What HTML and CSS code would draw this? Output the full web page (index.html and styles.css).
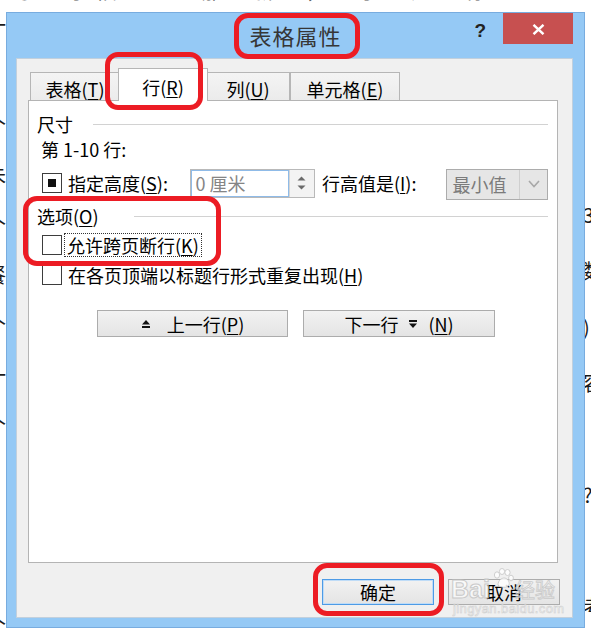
FILE: index.html
```html
<!DOCTYPE html>
<html lang="zh-CN">
<head>
<meta charset="utf-8">
<title>表格属性</title>
<link rel="stylesheet" href="styles.css">
</head>
<body>
<div class="doc doc-top">的 时候 一 那 新 ， 了 是 有 一 个 在 中 和</div>
<div class="doc doc-left"><span>一</span><span></span><span>个</span><span>朱</span><span>个</span><span>餐</span><span>个</span><span>一</span><span>个</span><span></span><span>0</span><span></span><span>个</span></div>
<div class="doc doc-right"><span></span><span></span><span></span><span>3</span><span>数</span><span>)</span><span>容</span><span></span><span>?</span><span></span><span>考</span></div>

<div class="window">
  <div class="titlebar">
    <div></div>
    <div class="title">表格属性</div>
    <div class="title-actions">
      <span class="help">?</span>
      <span class="close"><svg width="13" height="11" viewBox="0 0 13 11"><path d="M1.5 0.8 L11.5 10.2 M11.5 0.8 L1.5 10.2" stroke="#fff" stroke-width="2.4" fill="none"/></svg></span>
    </div>
  </div>
  <div class="client">
    <div class="tabs">
      <div class="tab t1">表格(<u>T</u>)</div>
      <div class="tab active">行(<u>R</u>)</div>
      <div class="tab t3">列(<u>U</u>)</div>
      <div class="tab t4">单元格(<u>E</u>)</div>
    </div>
    <div class="panel">
      <div class="group-head g1"><span>尺寸</span><i class="rule"></i></div>
      <div class="row-label">第 1-10 行:</div>
      <div class="size-row">
        <span class="check checked"></span>
        <span class="lbl lbl-h">指定高度(<u>S</u>):</span>
        <div class="spin">
          <div class="spin-field">0 厘米</div>
          <div class="spin-btns">
            <svg width="9" height="5" viewBox="0 0 9 5"><path d="M0.5 4.5 L4.5 0.5 L8.5 4.5Z" fill="#6a6a6a"/></svg>
            <svg width="9" height="5" viewBox="0 0 9 5"><path d="M0.5 0.5 L4.5 4.5 L8.5 0.5Z" fill="#6a6a6a"/></svg>
          </div>
        </div>
        <span class="lbl lbl-r">行高值是(<u>I</u>):</span>
        <div class="select">
          <span class="select-val">最小值</span>
          <span class="select-arrow"><svg width="12" height="8" viewBox="0 0 12 8"><path d="M1 1 L6 6.5 L11 1" stroke="#a8a8a8" stroke-width="1.6" fill="none"/></svg></span>
        </div>
      </div>
      <div class="group-head g2"><span>选项(<u>O</u>)</span><i class="rule"></i></div>
      <div class="check-row"><span class="check"></span><span class="focus">允许跨页断行(<u>K</u>)</span></div>
      <div class="check-row r2"><span class="check"></span><span class="plain">在各页顶端以标题行形式重复出现(<u>H</u>)</span></div>
      <div class="nav-row">
        <button class="btn nav prev"><svg width="10" height="10" viewBox="0 0 10 10"><path d="M1 5.5 L5 1 L9 5.5Z" fill="#111"/><rect x="1" y="7" width="8" height="2" fill="#111"/></svg><span>上一行(<u>P</u>)</span></button>
        <button class="btn nav next"><span>下一行</span><svg width="10" height="10" viewBox="0 0 10 10"><rect x="1" y="1" width="8" height="2" fill="#111"/><path d="M1 4.5 L5 9 L9 4.5Z" fill="#111"/></svg><span>(<u>N</u>)</span></button>
      </div>
    </div>
    <div class="footer">
      <button class="btn ok">确定</button>
      <button class="btn cancel">取消</button>
    </div>
  </div>
</div>

<div class="mark m-title"></div>
<div class="mark m-tab"></div>
<div class="mark m-opt"></div>
<div class="mark m-ok"></div>

<div class="watermark">
  <div class="wm-top"><span class="wm-bai">Bai</span><svg class="wm-paw" width="22" height="22" viewBox="0 0 22 22"><g fill="#fff" stroke="#c9c9c9" stroke-width="1"><ellipse cx="5" cy="7" rx="2.6" ry="3.2"/><ellipse cx="10" cy="3.5" rx="2.6" ry="3"/><ellipse cx="15.5" cy="4.5" rx="2.6" ry="3"/><ellipse cx="19" cy="10" rx="2.4" ry="2.8"/><path d="M6 17 C6 12 10 10 12 10 C15 10 18 13 17 17 C16 20 8 20 6 17Z"/></g></svg><span class="wm-jy">经验</span></div>
  <div class="wm-url">jingyan.baidu.com</div>
</div>
</body>
</html>
```

FILE: styles.css
```css
* {
  box-sizing: border-box;
}

html, body {
  margin: 0;
}

body {
  position: relative;
  width: 591px;
  height: 633px;
  overflow: hidden;
  background: #ffffff;
  padding: 12px 0 0 6px;
  font-family: "Noto Sans CJK SC", "Noto Sans", sans-serif;
  font-size: 18px;
  line-height: 20px;
  color: #000;
}

u {
  text-decoration: underline;
  text-underline-offset: 2px;
  text-decoration-thickness: 1px;
}

/* background document fragments */
.doc {
  position: absolute;
  color: #1a1a1a;
  font-size: 20px;
}

.doc-top {
  top: -19px;
  left: 10px;
  white-space: nowrap;
  letter-spacing: 14px;
  color: #555;
}

.doc-left {
  top: 0;
  left: -14px;
  display: flex;
  flex-direction: column;
}

.doc-left span,
.doc-right span {
  display: block;
  height: 50px;
  line-height: 50px;
}

.doc-right {
  top: 19px;
  left: 583px;
  display: flex;
  flex-direction: column;
}

.doc-right span {
  height: 56px;
  line-height: 56px;
}

/* window frame */
.window {
  position: relative;
  z-index: 1;
  width: 579px;
  height: 616px;
  border: 1px solid #78acdf;
  background: #95c9f5;
  display: flex;
  flex-direction: column;
}

.titlebar {
  height: 45px;
  display: grid;
  grid-template-columns: 1fr auto 1fr;
}

.title {
  line-height: 44px;
  font-size: 22px;
  color: #363636;
  letter-spacing: 1px;
}

.title-actions {
  display: flex;
  justify-content: flex-end;
  align-items: flex-start;
  padding-right: 11px;
}

.help {
  font-family: "Liberation Sans", sans-serif;
  font-weight: bold;
  font-size: 19px;
  line-height: 20px;
  margin-top: 8px;
  margin-right: 17px;
  color: #222;
}

.close {
  width: 70px;
  height: 31px;
  background: #c75050;
  display: flex;
  align-items: center;
  justify-content: center;
  padding-top: 2px;
}

/* client area */
.client {
  margin: 0 11px 0 9px;
  height: 560px;
  background: #f0f0f0;
  border: 1px solid #c2d0dd;
  padding: 0 14px 0 11px;
  display: flex;
  flex-direction: column;
}

.tabs {
  margin-top: 9px;
  height: 33px;
  margin-bottom: -1px;
  display: flex;
  align-items: flex-end;
  padding-left: 2px;
}

.tab {
  height: 29px;
  border: 1px solid #b6b6b6;
  border-bottom: none;
  background: linear-gradient(#f4f4f4, #ebebeb);
  text-align: center;
  padding-top: 6px;
  white-space: nowrap;
}

.t1 { width: 90px; }
.t3 { width: 84px; }
.t4 { width: 110px; }

.tab.active {
  position: relative;
  z-index: 1;
  width: 90px;
  height: 33px;
  margin: 0 -2px;
  background: #ffffff;
  padding-top: 8px;
}

.panel {
  height: 463px;
  background: #ffffff;
  border: 1px solid #b4b4b4;
  padding: 0 9px 0 0;
  display: flex;
  flex-direction: column;
}

.group-head {
  height: 20px;
  display: flex;
  align-items: center;
  padding-left: 8px;
  white-space: nowrap;
}

.group-head .rule {
  flex: 1;
  height: 1px;
  background: #d2d2d2;
}

.g1 { margin-top: 13px; }
.g1 .rule { margin-left: 20px; }
.g2 { margin-top: 6px; }
.g2 .rule { margin-left: 35px; }

.row-label {
  margin-top: 5px;
  height: 20px;
  padding-left: 12px;
}

.size-row {
  margin-top: 7px;
  height: 34px;
  display: flex;
  align-items: center;
  padding-left: 13px;
}

.check {
  width: 20px;
  height: 20px;
  border: 1px solid #3d3d3d;
  background: #fff;
  flex: none;
  display: flex;
  align-items: center;
  justify-content: center;
}

.check.checked::after {
  content: "";
  width: 8px;
  height: 8px;
  background: #111;
}

.lbl {
  white-space: nowrap;
}

.lbl-h {
  width: 123px;
  margin-left: 6px;
}

.lbl-r {
  width: 125px;
  margin-left: 7px;
}

.spin {
  width: 125px;
  height: 29px;
  display: flex;
  border: 1px solid #b9b9b9;
  background: #fff;
}

.spin-field {
  flex: 1;
  border: 1px solid #8fbbe8;
  color: #858585;
  padding-left: 3px;
  line-height: 25px;
  white-space: nowrap;
}

.spin-btns {
  width: 25px;
  background: #f3f3f3;
  border-left: 1px solid #d4d4d4;
  display: flex;
  flex-direction: column;
  align-items: center;
  justify-content: center;
  gap: 4px;
}

.select {
  width: 102px;
  height: 31px;
  margin-top: 2px;
  display: flex;
  background: #e6e6e6;
  border: 1px solid #acacac;
}

.select-val {
  flex: 1;
  color: #7b7b7b;
  padding-left: 5px;
  line-height: 29px;
}

.select-arrow {
  width: 28px;
  border-left: 1px solid #cfcfcf;
  display: flex;
  align-items: center;
  justify-content: center;
}

.check-row {
  margin-top: 9px;
  height: 20px;
  display: flex;
  align-items: center;
  padding-left: 13px;
  white-space: nowrap;
}

.check-row.r2 {
  margin-top: 10px;
}

.focus {
  margin-left: 3px;
  padding: 1px 2px;
  outline: 1px dotted #333;
  outline-offset: 0;
}

.plain {
  margin-left: 6px;
}

.nav-row {
  margin-top: 25px;
  display: flex;
  gap: 15px;
  padding-left: 68px;
}

.btn {
  font-family: inherit;
  font-size: 18px;
  line-height: 20px;
  color: #000;
  padding: 0;
  border: 1px solid #acacac;
  background: linear-gradient(#f2f2f2, #e4e4e4);
  display: flex;
  align-items: center;
  justify-content: center;
}

.nav {
  height: 27px;
}

.prev {
  width: 191px;
  gap: 16px;
}

.next {
  width: 192px;
  gap: 10px;
}

.footer {
  margin-top: 16px;
  margin-right: -2px;
  display: flex;
  justify-content: flex-end;
  gap: 14px;
}

.footer .btn {
  width: 112px;
  height: 26px;
}

.ok {
  border-color: #4d9be6;
  box-shadow: inset 0 0 0 1px #bfdcf7;
}

/* red annotation outlines */
.mark {
  position: absolute;
  z-index: 3;
  border: 5px solid #ec1c24;
  border-radius: 14px;
}

.m-title { left: 234px; top: 13px; width: 126px; height: 46px; }
.m-tab { left: 105px; top: 52px; width: 98px; height: 58px; border-radius: 13px; }
.m-opt { left: 23px; top: 196px; width: 198px; height: 70px; }
.m-ok { left: 313px; top: 563px; width: 131px; height: 53px; }

/* watermark */
.watermark {
  position: absolute;
  z-index: 2;
  left: 451px;
  top: 568px;
  width: 110px;
  display: flex;
  flex-direction: column;
  align-items: flex-start;
  opacity: 0.85;
}

.wm-top {
  display: flex;
  align-items: flex-end;
  height: 34px;
}

.wm-bai {
  font-family: "Liberation Sans", sans-serif;
  font-weight: bold;
  font-size: 25px;
  line-height: 26px;
  color: rgba(255, 255, 255, 0.75);
  -webkit-text-stroke: 1px #c4c4c4;
}

.wm-paw {
  align-self: flex-start;
  margin: 0 1px 0 2px;
}

.wm-jy {
  font-size: 20px;
  line-height: 24px;
  color: rgba(255, 255, 255, 0.75);
  -webkit-text-stroke: 0.8px #c4c4c4;
}

.wm-url {
  font-family: "Liberation Sans", sans-serif;
  font-size: 13px;
  line-height: 14px;
  letter-spacing: 0.4px;
  color: rgba(255, 255, 255, 0.8);
  -webkit-text-stroke: 0.6px #cbcbcb;
  margin-left: 2px;
}
```
